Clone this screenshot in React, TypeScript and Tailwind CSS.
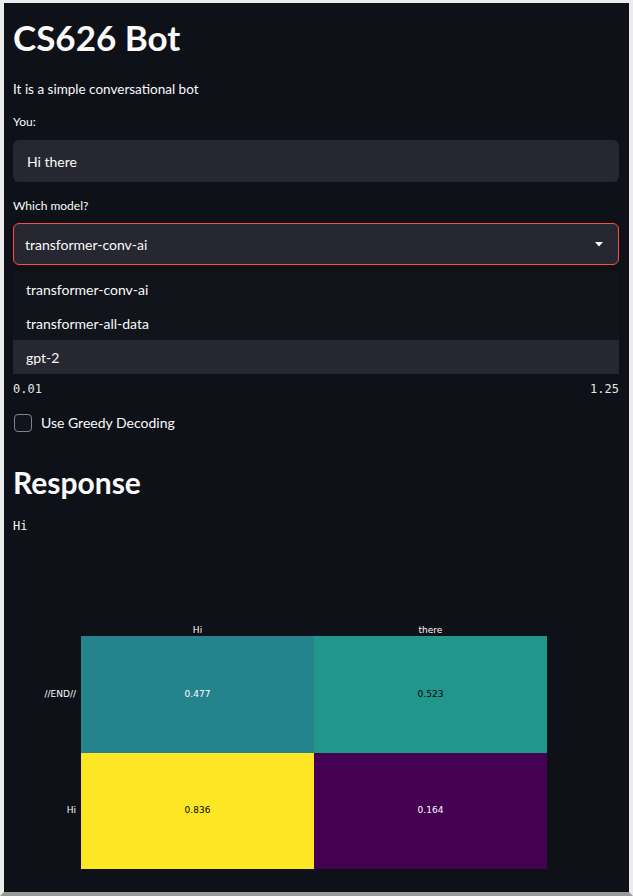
import React from "react";

const sans = { fontFamily: "Lato, 'Noto Sans', sans-serif" };
const mono = { fontFamily: "'DejaVu Sans Mono', monospace" };

export default function App() {
  const options = ["transformer-conv-ai", "transformer-all-data", "gpt-2"];
  const cells = [
    { row: "//END//", values: [{ v: "0.477", bg: "bg-[#25838e]", fg: "text-white" }, { v: "0.523", bg: "bg-[#21978b]", fg: "text-black" }] },
    { row: "Hi", values: [{ v: "0.836", bg: "bg-[#fde725]", fg: "text-black" }, { v: "0.164", bg: "bg-[#440154]", fg: "text-white" }] },
  ];
  return (
    <div
      className="w-[633px] h-[896px] bg-[#0e1117] border-t-[3px] border-x-[4px] border-b-[4px] border-[#ececec] border-b-[#9a9a9a] text-[#fafafa] pl-[9px] pr-[10px] overflow-hidden"
      style={sans}
    >
      <h1 className="text-[35px] font-bold leading-none mt-[17px]">CS626 Bot</h1>
      <p className="text-[13.5px] mt-[25px] leading-[18px]">It is a simple conversational bot</p>

      <label className="block text-[12px] mt-[16px] leading-[16px]">You:</label>
      <div className="mt-[10px] h-[42px] rounded-md bg-[#262730] flex items-center px-[14px] text-[14px]">Hi there</div>

      <label className="block text-[12px] mt-[16px] leading-[16px]">Which model?</label>
      <div className="mt-[9px] h-[42px] rounded-md bg-[#262730] border border-[#ff4b4b] flex items-center justify-between pl-[11px] pr-[15px] text-[14px]">
        <span>transformer-conv-ai</span>
        <svg width="8" height="5" viewBox="0 0 8 5">
          <path d="M0 0 L8 0 L4 4.5 Z" fill="#fafafa" />
        </svg>
      </div>

      <ul className="mt-[7px] bg-[#12141b] text-[14px]">
        {options.map((o, i) => (
          <li
            key={i}
            className={`h-[34px] flex items-center px-[13px] ${i == 2 ? "bg-[#262730]" : ""}`}
          >
            {o}
          </li>
        ))}
      </ul>

      <div className="flex justify-between text-[12px] leading-[14px] mt-[8px] text-[#e6e6e6]" style={mono}>
        <span>0.01</span>
        <span>1.25</span>
      </div>

      <div className="flex items-center gap-[9px] mt-[16px]">
        <div className="w-[18px] h-[18px] rounded-[4px] border border-[#80838b] bg-[#11141b] ml-[1px]"></div>
        <span className="text-[14px]">Use Greedy Decoding</span>
      </div>

      <h2 className="text-[30px] font-bold leading-none mt-[34px]">Response</h2>
      <div className="text-[12px] mt-[22px] leading-[14px]" style={mono}>Hi</div>

      <div className="mt-[92px] ml-[68px]" style={{ fontFamily: "'DejaVu Sans', sans-serif" }}>
        <div className="flex text-[9px] leading-[11px] h-[11px]">
          <div className="w-[233px] text-center">Hi</div>
          <div className="w-[233px] text-center">there</div>
        </div>
        {cells.map((r, i) => (
          <div key={i} className="flex relative">
            <div className="absolute right-full pr-[5px] top-0 h-full flex items-center text-[9px]">{r.row}</div>
            {r.values.map((c, j) => (
              <div key={j} className={`w-[233px] h-[116.5px] flex items-center justify-center text-[9px] ${c.bg} ${c.fg}`}>
                {c.v}
              </div>
            ))}
          </div>
        ))}
      </div>
    </div>
  );
}
